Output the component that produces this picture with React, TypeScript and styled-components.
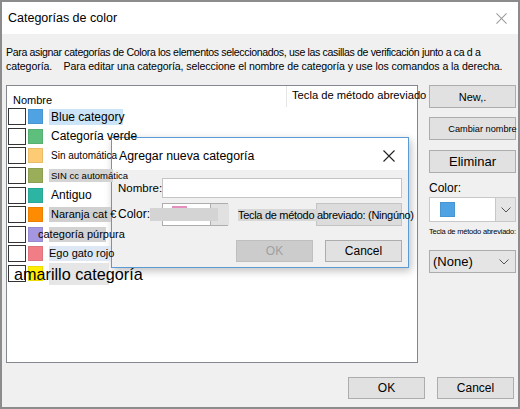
import React from "react";
import styled, { createGlobalStyle } from "styled-components";

const Global = createGlobalStyle`
  html, body { margin: 0; padding: 0; background: #ffffff; }
  body { font-family: "Segoe UI", "Liberation Sans", Arial, sans-serif; color: #000; }
  * { box-sizing: border-box; }
`;

const Window = styled.div`
  position: relative;
  width: 520px;
  height: 409px;
  border: 2px solid #8c8c8c;
  display: flex;
  flex-direction: column;
  background: #f0f0f0;
`;

const TitleBar = styled.div`
  height: 32px;
  background: #ffffff;
  display: flex;
  align-items: center;
  justify-content: space-between;
  padding: 0 11px 0 6px;
  font-size: 12.5px;
`;

const Body = styled.div`
  flex: 1;
  display: flex;
  flex-direction: column;
  padding: 11px 0 0 4px;
`;

const Description = styled.div`
  display: flex;
  flex-direction: column;
  font-size: 10.6px;
  line-height: 14px;
  white-space: nowrap;
`;

const DescLine = styled.span<{ $ls: number }>`
  letter-spacing: ${(p) => p.$ls}px;
`;

const Main = styled.div`
  margin-top: 12px;
  display: grid;
  grid-template-columns: 412px 87px;
  column-gap: 11px;
  height: 278px;
`;

const ListWrap = styled.div`
  background: #ffffff;
  border: 1px solid #828790;
  display: flex;
  flex-direction: column;
`;

const Header = styled.div`
  height: 21px;
  display: grid;
  grid-template-columns: 279px 1fr;
`;

const HeaderCell = styled.div<{ $divider?: boolean }>`
  display: flex;
  align-items: ${(p) => (p.$divider ? "center" : "flex-end")};
  padding-left: ${(p) => (p.$divider ? "5px" : "6px")};
  padding-bottom: ${(p) => (p.$divider ? "4px" : "1px")};
  border-left: ${(p) => (p.$divider ? "1px solid #e5e5e5" : "none")};
  white-space: nowrap;
  overflow: visible;
  font-size: ${(p) => (p.$divider ? "11.2px" : "11px")};
`;

const Row = styled.div`
  height: 19.6px;
  display: flex;
  align-items: center;
  padding-left: 1px;
  gap: 2px;
`;

const Check = styled.div`
  width: 18px;
  height: 17px;
  border: 1px solid #333;
  background: #fff;
  flex: none;
`;

const Swatch = styled.div<{ $c: string }>`
  width: 15px;
  height: 15px;
  background: ${(p) => p.$c};
  border: 1px solid rgba(0, 0, 0, 0.08);
  flex: none;
  margin-right: 4px;
`;

const Label = styled.span<{ $size: number; $bg?: string; $shift?: number; $w?: number }>`
  position: relative;
  z-index: 2;
  font-size: ${(p) => p.$size}px;
  line-height: ${(p) => Math.round(p.$size * 1.35)}px;
  white-space: nowrap;
  padding: 0 2px;
  ${(p) => (p.$shift ? `left: ${p.$shift}px;` : "")}
  ${(p) =>
    p.$bg
      ? `background: linear-gradient(to right, ${p.$bg}, ${p.$bg}) no-repeat ${p.$shift ? -p.$shift : 0}px 0 / ${p.$w ?? 200}px 100%;`
      : ""}
`;

const Side = styled.div`
  display: flex;
  flex-direction: column;
`;

const Button = styled.button<{ $size?: number; $mt?: number; $disabled?: boolean; $pl?: number }>`
  height: 23px;
  margin-top: ${(p) => p.$mt ?? 0}px;
  background: ${(p) => (p.$disabled ? "#cccccc" : "#e1e1e1")};
  border: 1px solid ${(p) => (p.$disabled ? "#bfbfbf" : "#adadad")};
  color: ${(p) => (p.$disabled ? "#a0a0a0" : "#000")};
  font-family: inherit;
  font-size: ${(p) => p.$size ?? 12}px;
  padding: 0 0 0 ${(p) => p.$pl ?? 0}px;
  white-space: nowrap;
  overflow: visible;
  display: flex;
  align-items: center;
  justify-content: center;
  flex: none;
`;

const SideLabel = styled.div`
  font-size: 12px;
  margin-top: 9px;
  height: 12px;
  line-height: 12px;
`;

const ColorCombo = styled.div`
  margin-top: 3px;
  height: 25px;
  display: grid;
  grid-template-columns: 1fr 20px;
  border: 1px solid #c8c8c8;
  background: #fff;
`;

const ComboSwatchCell = styled.div`
  display: flex;
  align-items: center;
  padding-left: 10px;
  background: #fff;
`;

const ComboArrow = styled.div`
  background: #e5e5e5;
  border-left: 1px solid #c8c8c8;
  display: flex;
  align-items: center;
  justify-content: center;
`;

const TinyLabel = styled.div`
  margin-top: 5px;
  font-size: 7.5px;
  letter-spacing: -0.2px;
  white-space: nowrap;
  height: 9px;
`;

const NoneCombo = styled.div`
  margin-top: 14px;
  height: 23px;
  background: #e5e5e5;
  border: 1px solid #acacac;
  display: flex;
  align-items: center;
  justify-content: space-between;
  padding: 0 6px 0 3px;
  font-size: 13px;
`;

const Footer = styled.div`
  margin-top: 14px;
  display: flex;
  justify-content: flex-end;
  gap: 12px;
  padding-right: 4px;
`;

const FooterButton = styled(Button)`
  width: 77px;
  height: 22px;
`;

/* ---- Sub dialog ---- */

const Dialog = styled.div`
  position: absolute;
  z-index: 1;
  left: 109px;
  top: 135px;
  width: 298px;
  height: 131px;
  border: 1px solid #5b9bd5;
  background: #f0f0f0;
  box-shadow: 2px 3px 8px rgba(0, 0, 0, 0.25);
  display: flex;
  flex-direction: column;
`;

const DialogTitle = styled.div`
  height: 32px;
  background: #fff;
  display: flex;
  align-items: center;
  justify-content: space-between;
  padding: 4px 13px 0 7px;
  font-size: 12.3px;
`;

const DialogBody = styled.div`
  display: flex;
  flex-direction: column;
  padding: 8px 6px 0 6px;
`;

const FieldRow = styled.div<{ $mt?: number }>`
  display: flex;
  align-items: center;
  gap: 10px;
  margin-top: ${(p) => p.$mt ?? 0}px;
`;

const NameRow = styled(FieldRow)`
  gap: 0;
`;

const FieldLabel = styled.span`
  width: 44px;
  flex: none;
  font-size: 11.5px;
  white-space: nowrap;
`;

const TextInput = styled.div`
  width: 240px;
  flex: none;
  height: 20px;
  background: #fff;
  border: 1px solid #c4c4c4;
`;

/* label that overhangs the control next to it */
const Overlap = styled.div<{ $lead: number; $ctl: number }>`
  flex: none;
  display: grid;
  grid-template-columns: ${(p) => p.$lead}px ${(p) => p.$ctl}px;
  align-items: center;
`;

const ColorLabel = styled.span`
  grid-row: 1;
  grid-column: 1 / -1;
  justify-self: start;
  position: relative;
  z-index: 1;
  width: 100px;
  font-size: 12px;
  line-height: 13px;
  white-space: nowrap;
  background: linear-gradient(to right, #d4d4d4, #d4d4d4) no-repeat 32px 0 / 68px 100%;
`;

const Picker = styled.div`
  grid-row: 1;
  grid-column: 2;
  height: 23px;
  display: grid;
  grid-template-columns: 47px 19px;
  border: 1px solid #adadad;
  background: #fff;
`;

const PickerSwatch = styled.div`
  padding: 2px 0 0 9px;
`;

const PinkBlock = styled.div`
  width: 15px;
  height: 7px;
  background: #e68fbe;
`;

const PickerArrow = styled.div`
  background: #e1e1e1;
  border-left: 1px solid #adadad;
`;

const ShortcutText = styled.span`
  grid-row: 1;
  grid-column: 1 / -1;
  justify-self: start;
  position: relative;
  z-index: 1;
  font-size: 11px;
  letter-spacing: -0.3px;
  white-space: nowrap;
  background: linear-gradient(to right, #d7d7d7, #d7d7d7) no-repeat 0 0 / 80px 100%;
`;

const DisabledCombo = styled.div`
  grid-row: 1;
  grid-column: 2;
  height: 23px;
  background: #dcdcdc;
  border: 1px solid #c4c4c4;
`;

const DialogButtons = styled.div`
  margin-top: 14px;
  display: flex;
  justify-content: flex-end;
  gap: 12px;
`;

const DialogButton = styled(Button)`
  width: 77px;
  height: 22px;
`;

const Close = ({ color, size }: { color: string; size: number }) => (
  <svg width={size} height={size} viewBox="0 0 12 12">
    <path d="M0.5 0.5 L11.5 11.5 M11.5 0.5 L0.5 11.5" stroke={color} strokeWidth="1.1" fill="none" />
  </svg>
);

const Chevron = ({ color = "#555" }: { color?: string }) => (
  <svg width="10" height="6" viewBox="0 0 10 6">
    <path d="M0.5 0.5 L5 5 L9.5 0.5" stroke={color} strokeWidth="1" fill="none" />
  </svg>
);

type Cat = {
  name: string;
  color: string;
  size: number;
  bg?: string;
  shift?: number;
  w?: number;
};

const cats: Cat[] = [
  { name: "Blue category", color: "#4fa3e3", size: 12, bg: "#cce4f7", w: 74 },
  { name: "Categoría verde", color: "#5dbf7b", size: 12 },
  { name: "Sin automática", color: "#fdcb74", size: 10 },
  { name: "SIN cc automática", color: "#9aae5a", size: 9.5, bg: "#d4d4d4", w: 64 },
  { name: "Antiguo", color: "#2db5a4", size: 12 },
  { name: "Naranja cat €", color: "#ff8b00", size: 11, bg: "#d0d0d0", w: 62 },
  { name: "categoría púrpura", color: "#a596e2", size: 11, bg: "#d3d3d3", shift: -13, w: 57 },
  { name: "Ego gato rojo", color: "#f17e87", size: 11, bg: "#dde8f4", shift: -2, w: 62 },
  { name: "amarillo categoría", color: "#ffee00", size: 16.2, bg: "#e6e6e6", shift: -37, w: 60 },
];

function ListBox() {
  return (
    <ListWrap>
      <Header>
        <HeaderCell>Nombre</HeaderCell>
        <HeaderCell $divider>Tecla de método abreviado</HeaderCell>
      </Header>
      {cats.map((c) => (
        <Row key={c.name}>
          <Check />
          <Swatch $c={c.color} />
          <Label $size={c.size} $bg={c.bg} $shift={c.shift} $w={c.w}>
            {c.name}
          </Label>
        </Row>
      ))}
    </ListWrap>
  );
}

export default function App() {
  return (
    <>
      <Global />
      <Window>
        <TitleBar>
          <span>Categorías de color</span>
          <Close color="#9a9a9a" size={11} />
        </TitleBar>
        <Body>
          <Description>
            <DescLine $ls={-0.36}>
              Para asignar categorías de Colora los elementos seleccionados, use las casillas de verificación junto a ca d a
            </DescLine>
            <DescLine $ls={-0.1}>
              categoría.&nbsp;&nbsp;&nbsp; Para editar una categoría, seleccione el nombre de categoría y use los comandos a la derecha.
            </DescLine>
          </Description>
          <Main>
            <ListBox />
            <Side>
              <Button $size={11}>New,.</Button>
              <Button $size={9.2} $mt={9} $pl={20}>Cambiar nombre</Button>
              <Button $size={13} $mt={10}>Eliminar</Button>
              <SideLabel>Color:</SideLabel>
              <ColorCombo>
                <ComboSwatchCell>
                  <Swatch $c="#4fa3e3" />
                </ComboSwatchCell>
                <ComboArrow>
                  <Chevron />
                </ComboArrow>
              </ColorCombo>
              <TinyLabel>Tecla de método abreviado:</TinyLabel>
              <NoneCombo>
                <span>(None)</span>
                <Chevron />
              </NoneCombo>
            </Side>
          </Main>
          <Footer>
            <FooterButton>OK</FooterButton>
            <FooterButton>Cancel</FooterButton>
          </Footer>
        </Body>

        <Dialog>
          <DialogTitle>
            <span>Agregar nueva categoría</span>
            <Close color="#222" size={12} />
          </DialogTitle>
          <DialogBody>
            <NameRow>
              <FieldLabel>Nombre:</FieldLabel>
              <TextInput />
            </NameRow>
            <FieldRow $mt={5}>
              <Overlap $lead={44} $ctl={66}>
                <ColorLabel>Color:</ColorLabel>
                <Picker>
                  <PickerSwatch>
                    <PinkBlock />
                  </PickerSwatch>
                  <PickerArrow />
                </Picker>
              </Overlap>
              <Overlap $lead={78} $ctl={86}>
                <ShortcutText>Tecla de método abreviado: (Ningúno)</ShortcutText>
                <DisabledCombo />
              </Overlap>
            </FieldRow>
            <DialogButtons>
              <DialogButton $disabled>OK</DialogButton>
              <DialogButton>Cancel</DialogButton>
            </DialogButtons>
          </DialogBody>
        </Dialog>
      </Window>
    </>
  );
}
